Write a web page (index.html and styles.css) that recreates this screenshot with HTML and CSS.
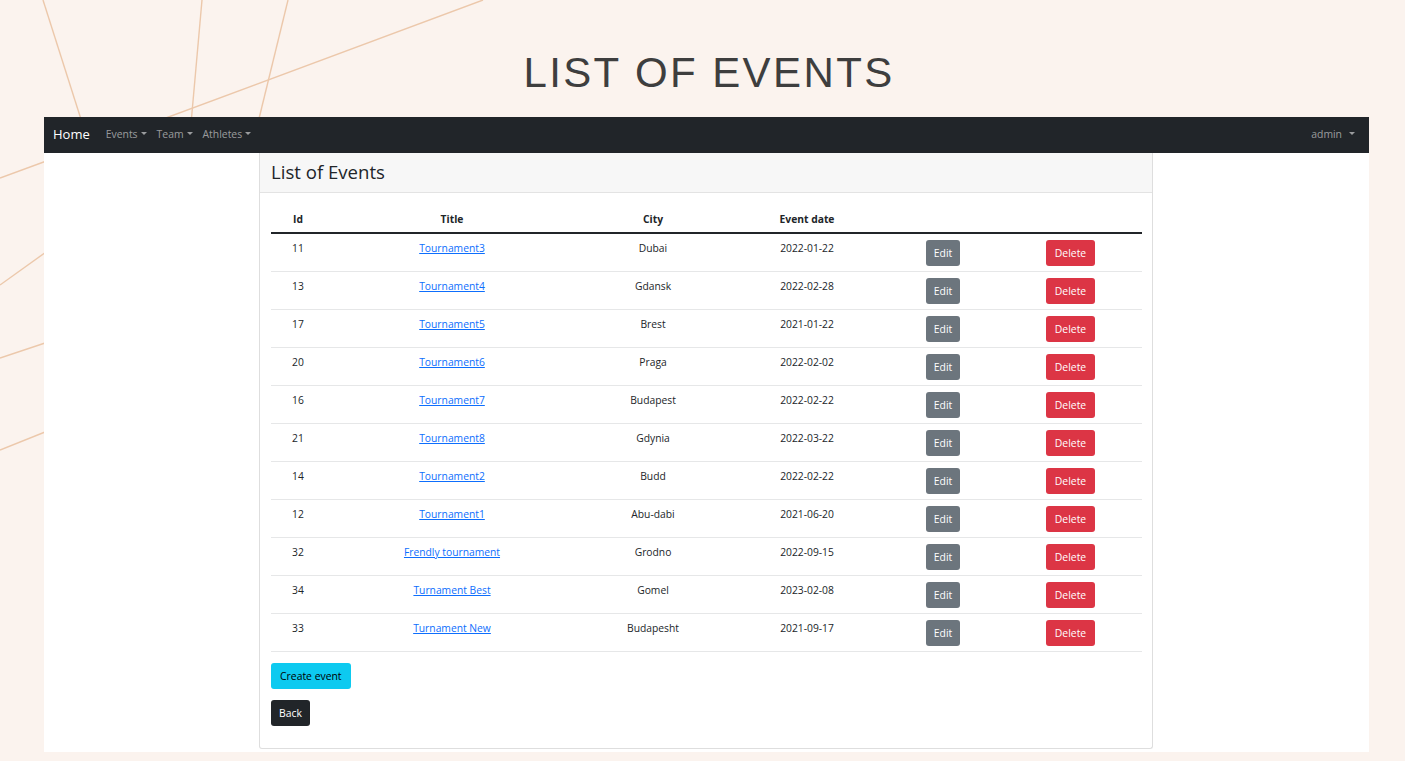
FILE: index.html
```html
<!DOCTYPE html>
<html lang="en">
<head>
<meta charset="utf-8">
<title>List of Events</title>
<link rel="stylesheet" href="styles.css">
</head>
<body>
<svg class="bg-lines" width="1405" height="761" viewBox="0 0 1405 761" aria-hidden="true">
  <g stroke="#ecc8ab" stroke-width="1.4" fill="none">
    <line x1="43" y1="0" x2="86" y2="135"/>
    <line x1="202" y1="0" x2="190" y2="135"/>
    <line x1="288" y1="0" x2="255" y2="135"/>
    <line x1="483" y1="0" x2="120" y2="135"/>
    <line x1="0" y1="178" x2="60" y2="156"/>
    <line x1="0" y1="285" x2="60" y2="242"/>
    <line x1="0" y1="358" x2="60" y2="338"/>
    <line x1="0" y1="450" x2="60" y2="426"/>
  </g>
</svg>

<header class="page-header">
  <h1 class="page-title">LIST OF EVENTS</h1>
</header>

<div class="app">
  <nav class="navbar">
    <div class="nav-left">
      <a class="brand" href="#">Home</a>
      <a class="nav-link" href="#">Events<span class="caret"></span></a>
      <a class="nav-link" href="#">Team<span class="caret"></span></a>
      <a class="nav-link" href="#">Athletes<span class="caret"></span></a>
    </div>
    <a class="nav-link" href="#">admin<span class="caret caret-wide"></span></a>
  </nav>

  <main class="content">
    <section class="card">
      <div class="card-header">List of Events</div>
      <div class="card-body">
        <table class="events">
          <colgroup>
            <col class="c-id"><col class="c-title"><col class="c-city"><col class="c-date"><col class="c-edit"><col class="c-del">
          </colgroup>
          <thead>
            <tr><th>Id</th><th>Title</th><th>City</th><th>Event date</th><th></th><th></th></tr>
          </thead>
          <tbody>
            <tr><td>11</td><td><a href="#">Tournament3</a></td><td>Dubai</td><td>2022-01-22</td><td><button class="btn btn-edit">Edit</button></td><td><button class="btn btn-del">Delete</button></td></tr>
            <tr><td>13</td><td><a href="#">Tournament4</a></td><td>Gdansk</td><td>2022-02-28</td><td><button class="btn btn-edit">Edit</button></td><td><button class="btn btn-del">Delete</button></td></tr>
            <tr><td>17</td><td><a href="#">Tournament5</a></td><td>Brest</td><td>2021-01-22</td><td><button class="btn btn-edit">Edit</button></td><td><button class="btn btn-del">Delete</button></td></tr>
            <tr><td>20</td><td><a href="#">Tournament6</a></td><td>Praga</td><td>2022-02-02</td><td><button class="btn btn-edit">Edit</button></td><td><button class="btn btn-del">Delete</button></td></tr>
            <tr><td>16</td><td><a href="#">Tournament7</a></td><td>Budapest</td><td>2022-02-22</td><td><button class="btn btn-edit">Edit</button></td><td><button class="btn btn-del">Delete</button></td></tr>
            <tr><td>21</td><td><a href="#">Tournament8</a></td><td>Gdynia</td><td>2022-03-22</td><td><button class="btn btn-edit">Edit</button></td><td><button class="btn btn-del">Delete</button></td></tr>
            <tr><td>14</td><td><a href="#">Tournament2</a></td><td>Budd</td><td>2022-02-22</td><td><button class="btn btn-edit">Edit</button></td><td><button class="btn btn-del">Delete</button></td></tr>
            <tr><td>12</td><td><a href="#">Tournament1</a></td><td>Abu-dabi</td><td>2021-06-20</td><td><button class="btn btn-edit">Edit</button></td><td><button class="btn btn-del">Delete</button></td></tr>
            <tr><td>32</td><td><a href="#">Frendly tournament</a></td><td>Grodno</td><td>2022-09-15</td><td><button class="btn btn-edit">Edit</button></td><td><button class="btn btn-del">Delete</button></td></tr>
            <tr><td>34</td><td><a href="#">Turnament Best</a></td><td>Gomel</td><td>2023-02-08</td><td><button class="btn btn-edit">Edit</button></td><td><button class="btn btn-del">Delete</button></td></tr>
            <tr><td>33</td><td><a href="#">Turnament New</a></td><td>Budapesht</td><td>2021-09-17</td><td><button class="btn btn-edit">Edit</button></td><td><button class="btn btn-del">Delete</button></td></tr>
          </tbody>
        </table>
        <div class="actions">
          <button class="btn btn-create">Create event</button>
          <button class="btn btn-back">Back</button>
        </div>
      </div>
    </section>
  </main>
</div>
</body>
</html>
```

FILE: styles.css
```css
html, body {
  margin: 0;
  padding: 0;
}
body {
  background: #fbf3ee;
  font-family: "Open Sans", "Noto Sans", sans-serif;
  color: #212529;
  position: relative;
  min-height: 761px;
}
.bg-lines {
  position: absolute;
  left: 0;
  top: 0;
  z-index: 0;
}
.page-header {
  position: relative;
  z-index: 1;
  height: 117px;
  box-sizing: border-box;
  padding-top: 49px;
}
.page-title {
  margin: 0;
  padding-left: 13px;
  text-align: center;
  font-family: "Liberation Sans", Arial, sans-serif;
  font-weight: normal;
  font-size: 42px;
  line-height: 48px;
  letter-spacing: 2.4px;
  color: #3e3e3e;
}
.app {
  position: relative;
  z-index: 1;
  margin-left: 44px;
  width: 1325px;
  height: 635px;
  background: #fff;
}
.navbar {
  height: 36px;
  box-sizing: border-box;
  padding: 0 14px 3px 9px;
  background: #212529;
  display: flex;
  align-items: center;
  justify-content: space-between;
}
.nav-left {
  display: flex;
  align-items: center;
}
.brand {
  color: #fff;
  font-size: 13px;
  text-decoration: none;
  margin-right: 16px;
}
.nav-link {
  color: rgba(255, 255, 255, 0.55);
  font-size: 10.4px;
  text-decoration: none;
  margin-right: 10px;
  display: inline-flex;
  align-items: center;
}
.navbar > .nav-link {
  margin-right: 0;
}
.caret {
  display: inline-block;
  width: 0;
  height: 0;
  margin-left: 3px;
  border-top: 3px solid currentColor;
  border-left: 3px solid transparent;
  border-right: 3px solid transparent;
}
.caret-wide {
  margin-left: 7px;
}
.content {
  padding-left: 215px;
}
.card {
  width: 894px;
  height: 596px;
  box-sizing: border-box;
  border: 1px solid #dedede;
  border-top: 0;
  border-radius: 0 0 3px 3px;
  background: #fff;
}
.card-header {
  height: 40px;
  box-sizing: border-box;
  padding: 0 11px;
  background: #f7f7f7;
  border-bottom: 1px solid #e3e3e3;
  font-size: 18.6px;
  line-height: 38px;
  color: #212529;
}
.card-body {
  padding: 12px 11px;
}
.events {
  width: 871px;
  table-layout: fixed;
  border-collapse: collapse;
  font-size: 10.3px;
  line-height: 16px;
  margin-bottom: 11px;
}
.c-id { width: 54px; }
.c-title { width: 254px; }
.c-city { width: 148px; }
.c-date { width: 160px; }
.c-edit { width: 112px; }
.c-del { width: 143px; }
.events th {
  font-weight: bold;
  text-align: center;
  padding: 6px 5px 5px;
  border-bottom: 2px solid #212529;
}
.events td {
  text-align: center;
  vertical-align: top;
  padding: 6px 5px 5px;
  border-bottom: 1px solid #e6e7e8;
  color: #212529;
}
.events a {
  color: #0d6efd;
  text-decoration: underline;
}
.btn {
  font-family: inherit;
  font-size: 10.4px;
  line-height: 16px;
  padding: 4px 7px;
  border: 1px solid transparent;
  border-radius: 3px;
  cursor: pointer;
  display: inline-block;
}
.btn-edit {
  background: #6c757d;
  color: #fff;
}
.btn-del {
  background: #dc3545;
  color: #fff;
  padding: 4px 8px;
}
.actions {
  display: flex;
  flex-direction: column;
  align-items: flex-start;
  gap: 11px;
}
.btn-create {
  background: #0dcaf0;
  color: #000;
  padding: 4px 8px;
}
.btn-back {
  background: #212529;
  color: #fff;
}
```
